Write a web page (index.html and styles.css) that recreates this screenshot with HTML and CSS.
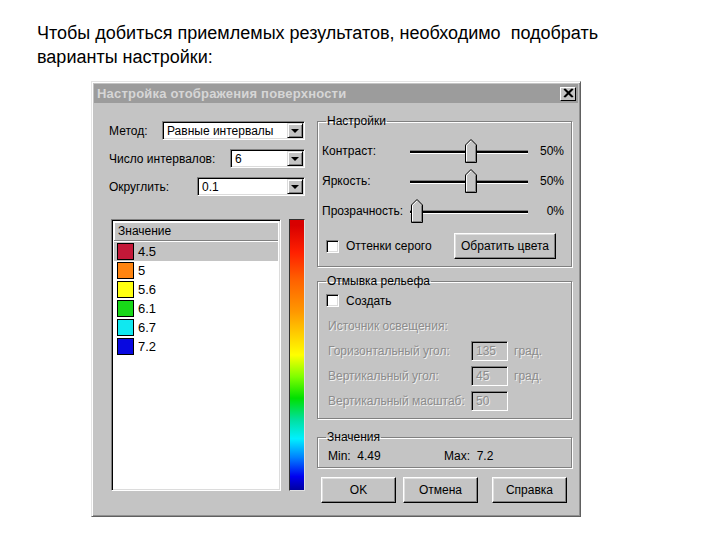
FILE: index.html
```html
<!DOCTYPE html>
<html lang="ru">
<head>
<meta charset="utf-8">
<title>Настройка</title>
<link rel="stylesheet" href="styles.css">
</head>
<body>
<p class="intro">Чтобы добиться приемлемых результатов, необходимо&nbsp; подобрать<br>варианты настройки:</p>
<div class="dialog">
  <div class="titlebar">
    <span class="title">Настройка отображения поверхности</span>
    <span class="close"><svg width="12" height="11" viewBox="0 0 12 11"><path d="M2 1 L10 9 M3 1 L11 9 M10 1 L2 9 M11 1 L3 9" stroke="#000" stroke-width="1.4"/></svg></span>
  </div>
  <div class="content">
    <div class="leftcol">
      <div class="row">
        <span class="lbl">Метод:</span>
        <div class="combo c1"><span class="val">Равные интервалы</span><span class="drop"><i></i></span></div>
      </div>
      <div class="row">
        <span class="lbl">Число интервалов:</span>
        <div class="combo c2"><span class="val">6</span><span class="drop"><i></i></span></div>
      </div>
      <div class="row">
        <span class="lbl">Округлить:</span>
        <div class="combo c3"><span class="val">0.1</span><span class="drop"><i></i></span></div>
      </div>
      <div class="listarea">
        <div class="list">
          <div class="lhead">Значение</div>
          <div class="item sel"><span class="sw" style="background:#c41838"></span>4.5</div>
          <div class="item"><span class="sw" style="background:#ff8410"></span>5</div>
          <div class="item"><span class="sw" style="background:#ffff10"></span>5.6</div>
          <div class="item"><span class="sw" style="background:#18d818"></span>6.1</div>
          <div class="item"><span class="sw" style="background:#10e8f0"></span>6.7</div>
          <div class="item"><span class="sw" style="background:#0808e0"></span>7.2</div>
        </div>
        <div class="colorbar"></div>
      </div>
    </div>
    <div class="rightcol">
      <fieldset class="grp g1">
        <legend>Настройки</legend>
        <div class="srow">
          <span class="slbl">Контраст:</span>
          <div class="slider"><div class="track"></div><svg class="thumb" style="left:55px" width="12" height="24" viewBox="0 0 12 24"><path d="M0.5 23.5 V6 L6 0.5 L11.5 6 V23.5 Z" fill="#c4c4c4" stroke="#000"/><path d="M1.5 22.5 V6.4 L6 1.9" fill="none" stroke="#fff"/><path d="M10.5 6.4 V22.5 H1.5" fill="none" stroke="#808080"/></svg></div>
          <span class="pct">50%</span>
        </div>
        <div class="srow">
          <span class="slbl">Яркость:</span>
          <div class="slider"><div class="track"></div><svg class="thumb" style="left:55px" width="12" height="24" viewBox="0 0 12 24"><path d="M0.5 23.5 V6 L6 0.5 L11.5 6 V23.5 Z" fill="#c4c4c4" stroke="#000"/><path d="M1.5 22.5 V6.4 L6 1.9" fill="none" stroke="#fff"/><path d="M10.5 6.4 V22.5 H1.5" fill="none" stroke="#808080"/></svg></div>
          <span class="pct">50%</span>
        </div>
        <div class="srow">
          <span class="slbl">Прозрачность:</span>
          <div class="slider"><div class="track"></div><svg class="thumb" style="left:1px" width="12" height="24" viewBox="0 0 12 24"><path d="M0.5 23.5 V6 L6 0.5 L11.5 6 V23.5 Z" fill="#c4c4c4" stroke="#000"/><path d="M1.5 22.5 V6.4 L6 1.9" fill="none" stroke="#fff"/><path d="M10.5 6.4 V22.5 H1.5" fill="none" stroke="#808080"/></svg></div>
          <span class="pct">0%</span>
        </div>
        <div class="crow">
          <span class="chk"></span><span class="clbl">Оттенки серого</span>
          <span class="btn invert">Обратить цвета</span>
        </div>
      </fieldset>
      <fieldset class="grp g2">
        <legend>Отмывка рельефа</legend>
        <div class="crow2"><span class="chk"></span><span class="clbl">Создать</span></div>
        <div class="dis src">Источник освещения:</div>
        <div class="drow"><span class="dis dl">Горизонтальный угол:</span><span class="edit dis">135</span><span class="dis unit">град.</span></div>
        <div class="drow"><span class="dis dl">Вертикальный угол:</span><span class="edit dis">45</span><span class="dis unit">град.</span></div>
        <div class="drow"><span class="dis dl">Вертикальный масштаб:</span><span class="edit dis">50</span></div>
      </fieldset>
      <fieldset class="grp g3">
        <legend>Значения</legend>
        <div class="vrow"><span class="vmin">Min:&nbsp; 4.49</span><span>Max:&nbsp; 7.2</span></div>
      </fieldset>
      <div class="buttons">
        <span class="btn b ok">OK</span>
        <span class="btn b cancel">Отмена</span>
        <span class="btn b help">Справка</span>
      </div>
    </div>
  </div>
</div>
</body>
</html>
```
FILE: styles.css
```css
html, body {
  margin: 0;
  padding: 0;
  background: #fff;
}
body {
  width: 720px;
  height: 540px;
  overflow: hidden;
  font-family: "Liberation Sans", Arial, sans-serif;
}
.intro {
  margin: 0;
  padding: 21px 0 0 37px;
  font-size: 18px;
  line-height: 24px;
  color: #000;
  height: 48px;
}
.dialog {
  margin: 12px 0 0 91px;
  width: 490px;
  height: 436px;
  box-sizing: border-box;
  background: #c4c4c4;
  border: 1px solid;
  border-color: #e4e4e4 #606060 #606060 #e4e4e4;
  box-shadow: inset 1px 1px 0 #fff, inset -1px -1px 0 #909090;
  padding: 2px;
  font-size: 12px;
  color: #000;
}
.titlebar {
  height: 19px;
  background: #9c9c9c;
  display: flex;
  align-items: center;
  justify-content: space-between;
  padding: 0 2px 0 3px;
}
.title {
  color: #d6d6d6;
  font-weight: bold;
  font-size: 13px;
  letter-spacing: 0.2px;
}
.close {
  width: 16px;
  height: 14px;
  background: #c4c4c4;
  box-sizing: border-box;
  border: 1px solid;
  border-color: #fff #000 #000 #fff;
  display: flex;
  align-items: center;
  justify-content: center;
}
.content {
  display: flex;
  padding: 11px 0 0 12px;
}
.leftcol {
  width: 199px;
  padding-top: 7px;
}
.row {
  display: flex;
  justify-content: space-between;
  align-items: center;
  height: 19px;
  margin-bottom: 9px;
  padding-left: 3px;
}
.combo {
  height: 19px;
  box-sizing: border-box;
  background: #fff;
  border: 1px solid;
  border-color: #808080 #fff #fff #808080;
  box-shadow: inset 1px 1px 0 #000, inset -1px -1px 0 #dcdcdc;
  display: flex;
  align-items: center;
  justify-content: space-between;
  padding: 1px;
}
.c1 { width: 143px; }
.c2 { width: 75px; }
.c3 { width: 108px; }
.val {
  padding-left: 3px;
}
.drop {
  width: 16px;
  height: 15px;
  box-sizing: border-box;
  background: #c4c4c4;
  border: 1px solid;
  border-color: #dcdcdc #000 #000 #dcdcdc;
  box-shadow: inset 1px 1px 0 #fff, inset -1px -1px 0 #808080;
  display: flex;
  align-items: center;
  justify-content: center;
}
.drop i {
  width: 0;
  height: 0;
  border-left: 4px solid transparent;
  border-right: 4px solid transparent;
  border-top: 4px solid #000;
}
.listarea {
  display: flex;
  gap: 8px;
  margin-top: 23px;
  padding-left: 5px;
}
.list {
  width: 171px;
  height: 272px;
  box-sizing: border-box;
  background: #fff;
  border: 1px solid;
  border-color: #808080 #fff #fff #808080;
  box-shadow: inset 1px 1px 0 #000, inset -1px -1px 0 #dcdcdc;
  padding: 2px;
}
.lhead {
  height: 19px;
  box-sizing: border-box;
  background: #c4c4c4;
  border-bottom: 1px solid #808080;
  box-shadow: inset 1px 1px 0 #fff;
  padding-left: 4px;
  line-height: 18px;
  margin-bottom: 1px;
}
.item {
  height: 19px;
  display: flex;
  align-items: center;
  padding-left: 3px;
  font-size: 13px;
}
.item.sel {
  background: #c4c4c4;
}
.sw {
  width: 15px;
  height: 15px;
  border: 1px solid #000;
  margin-right: 4px;
}
.colorbar {
  width: 16px;
  height: 272px;
  box-sizing: border-box;
  border: 1px solid #303030;
  border-right-color: #e0e0e0;
  border-bottom-color: #e0e0e0;
  background: linear-gradient(#d80000 2%, #ff2000 12%, #ff6000 22%, #ff9800 34%, #ffff00 50%, #80ff00 58%, #00e000 66%, #00e0a0 74%, #00f0ff 81%, #0080ff 88%, #0000f0 95%, #0000a0 100%);
}
.rightcol {
  width: 255px;
  margin-left: 12px;
}
.grp {
  margin: 0;
  border: 1px solid #808080;
  box-shadow: inset 1px 1px 0 #fff, 1px 1px 0 #fff;
  padding: 0 3px 0 4px;
  min-width: 0;
}
.grp legend {
  padding: 0 1px;
  margin-left: 4px;
  line-height: 14px;
}
.g1 {
  height: 153px;
  box-sizing: border-box;
  padding-top: 8px;
}
.srow {
  display: flex;
  align-items: center;
  height: 30px;
}
.slbl {
  width: 88px;
}
.slider {
  position: relative;
  width: 118px;
  height: 24px;
}
.track {
  position: absolute;
  left: 0;
  right: 0;
  top: 11px;
  height: 2px;
  background: #000;
  border-bottom: 1px solid #fff;
  border-top: 1px solid #808080;
}
.thumb {
  position: absolute;
  top: 0;
}
.pct {
  width: 36px;
  text-align: right;
}
.crow {
  display: flex;
  align-items: center;
  margin-top: 7px;
  padding-left: 4px;
}
.chk {
  width: 13px;
  height: 13px;
  box-sizing: border-box;
  background: #fff;
  border: 1px solid;
  border-color: #808080 #fff #fff #808080;
  box-shadow: inset 1px 1px 0 #000, inset -1px -1px 0 #dcdcdc;
  margin-right: 7px;
}
.btn {
  height: 26px;
  box-sizing: border-box;
  background: #c4c4c4;
  border: 1px solid;
  border-color: #fff #000 #000 #fff;
  box-shadow: inset -1px -1px 0 #808080, inset 1px 1px 0 #e0e0e0;
  display: flex;
  align-items: center;
  justify-content: center;
}
.invert {
  width: 102px;
  margin-left: auto;
  margin-right: 12px;
}
.g2 {
  margin-top: 7px;
  height: 145px;
  box-sizing: border-box;
  padding-top: 3px;
}
.crow2 {
  display: flex;
  align-items: center;
  height: 19px;
  padding-left: 4px;
}
.dis {
  color: #8c8c8c;
  text-shadow: 1px 1px 0 #f0f0f0;
}
.src {
  margin-top: 7px;
  padding-left: 6px;
  height: 19px;
  line-height: 19px;
}
.drow {
  display: flex;
  align-items: center;
  height: 20px;
  margin-top: 5px;
  padding-left: 6px;
}
.dl {
  width: 143px;
}
.edit {
  width: 37px;
  height: 20px;
  box-sizing: border-box;
  border: 1px solid;
  border-color: #808080 #fff #fff #808080;
  box-shadow: inset 1px 1px 0 #000;
  padding-left: 4px;
  line-height: 18px;
  margin-right: 6px;
}
.g3 {
  margin-top: 11px;
  height: 38px;
  box-sizing: border-box;
  padding-top: 4px;
}
.vrow {
  display: flex;
  padding-left: 6px;
  line-height: 16px;
}
.vmin {
  width: 116px;
}
.buttons {
  display: flex;
  margin-top: 9px;
  padding-left: 4px;
}
.b {
  width: 75px;
}
.cancel { margin-left: 7px; }
.help { margin-left: 14px; }
```
